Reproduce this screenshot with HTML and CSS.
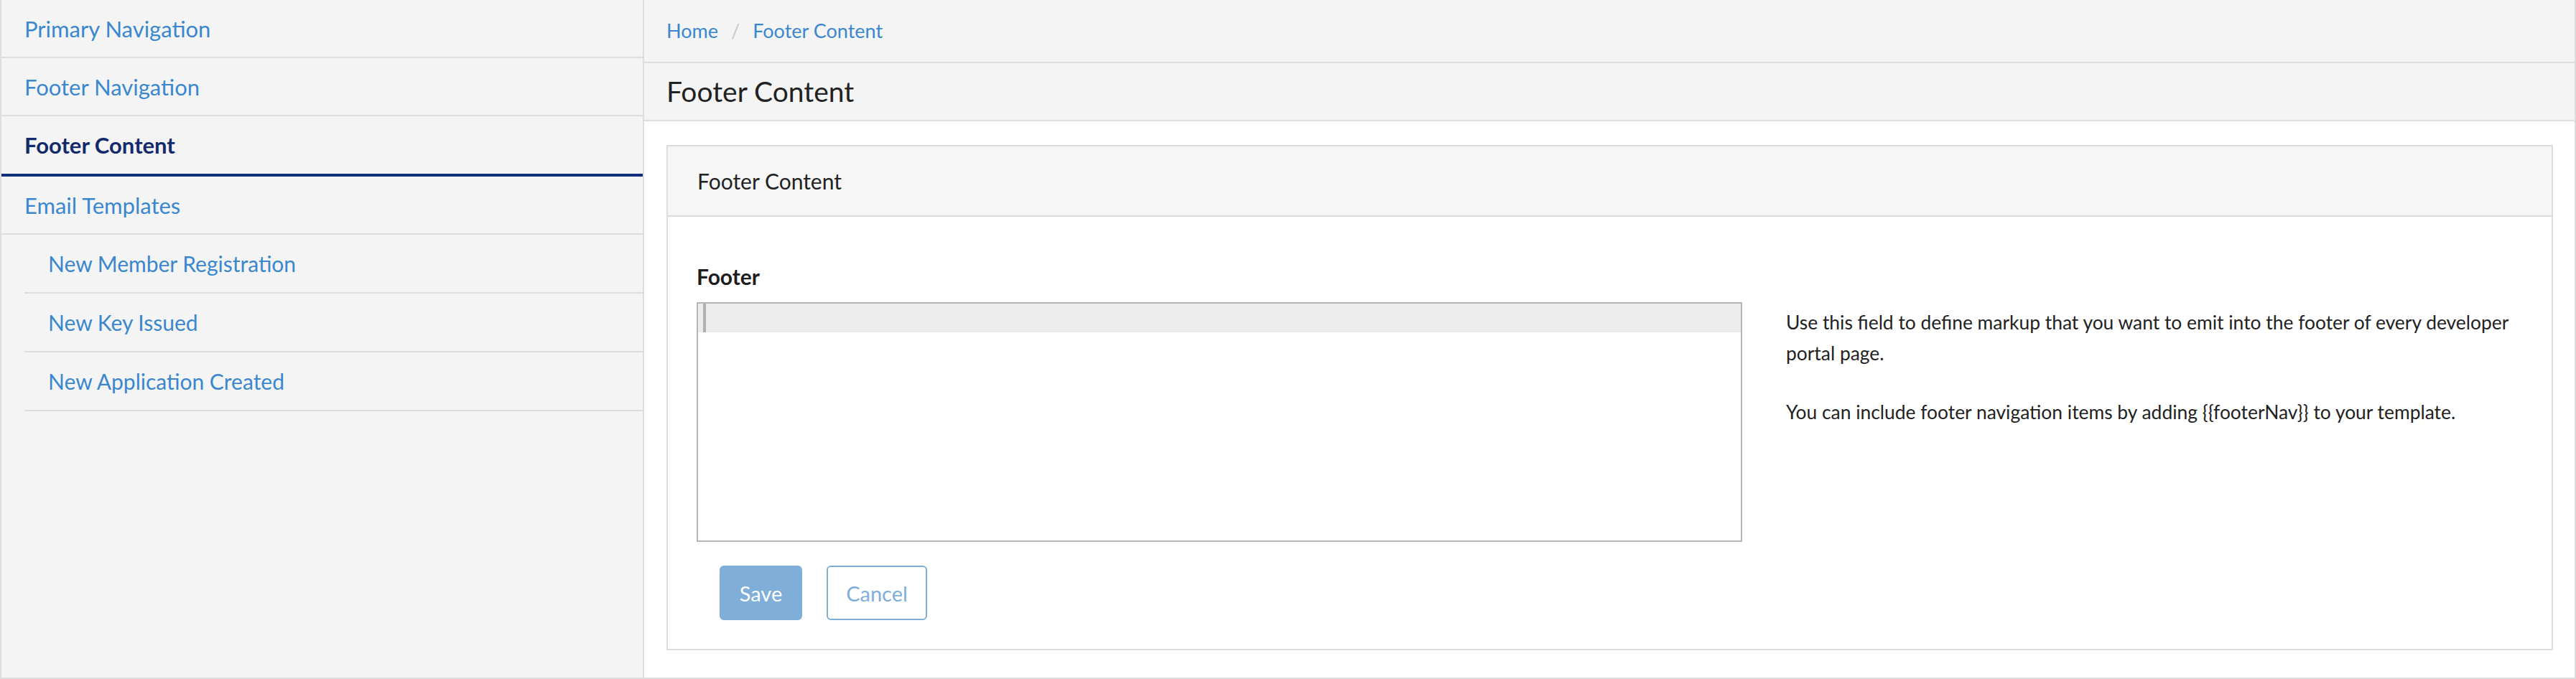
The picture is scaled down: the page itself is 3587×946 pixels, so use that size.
FILE: index.html
```html
<!DOCTYPE html>
<html lang="en">
<head>
<meta charset="utf-8">
<title>Footer Content</title>
<link rel="stylesheet" href="styles.css">
</head>
<body>
<div class="app">
  <nav class="sidebar">
    <a class="nav-item" href="#">Primary Navigation</a>
    <a class="nav-item" href="#">Footer Navigation</a>
    <a class="nav-item active" href="#">Footer Content</a>
    <a class="nav-item" href="#">Email Templates</a>
    <a class="nav-item sub" href="#">New Member Registration</a>
    <a class="nav-item sub" href="#">New Key Issued</a>
    <a class="nav-item sub" href="#">New Application Created</a>
  </nav>
  <main class="main">
    <div class="breadcrumb">
      <a href="#">Home</a>
      <span class="crumb-sep">/</span>
      <a href="#">Footer Content</a>
    </div>
    <div class="page-title">Footer Content</div>
    <div class="content">
      <section class="panel">
        <div class="panel-header">Footer Content</div>
        <div class="panel-body">
          <div class="field-label">Footer</div>
          <div class="field-row">
            <div class="editor">
              <div class="editor-line"><span class="cursor"></span></div>
            </div>
            <div class="help">
              <p>Use this field to define markup that you want to emit into the footer of every developer portal page.</p>
              <p>You can include footer navigation items by adding {{footerNav}} to your template.</p>
            </div>
          </div>
          <div class="actions">
            <button class="btn btn-primary" type="button">Save</button>
            <button class="btn btn-outline" type="button">Cancel</button>
          </div>
        </div>
      </section>
    </div>
  </main>
</div>
</body>
</html>
```

FILE: styles.css
```css
* { box-sizing: border-box; }

html, body {
  margin: 0;
  padding: 0;
  background: #ffffff;
}

body {
  font-family: Lato, "Open Sans", "Liberation Sans", sans-serif;
  color: #222222;
}

.app {
  display: flex;
  height: 946px;
  border-left: 2px solid #dddddd;
  border-right: 2px solid #dddddd;
  border-bottom: 2px solid #dddddd;
}

.sidebar {
  width: 895px;
  flex: none;
  background: #f4f4f4;
  border-right: 2px solid #dddddd;
  display: flex;
  flex-direction: column;
}

.nav-item {
  display: flex;
  align-items: center;
  height: 81px;
  padding-left: 32px;
  border-bottom: 2px solid #dddddd;
  color: #3a87cf;
  text-decoration: none;
  font-size: 31px;
}

.nav-item.active {
  height: 84px;
  color: #12296b;
  font-weight: 700;
  border-bottom: 4px solid #12307a;
}

.nav-item.sub {
  height: 82px;
  margin-left: 32px;
  padding-left: 33px;
  font-size: 30px;
}

.main {
  flex: 1;
  display: flex;
  flex-direction: column;
  min-width: 0;
}

.breadcrumb {
  height: 89px;
  background: #f4f4f4;
  border-bottom: 2px solid #dddddd;
  display: flex;
  align-items: center;
  padding-left: 31px;
  font-size: 27px;
}

.breadcrumb a {
  color: #3a87cf;
  text-decoration: none;
}

.crumb-sep {
  color: #c8c8c8;
  margin: 0 18px;
}

.page-title {
  height: 82px;
  background: #f4f4f4;
  border-bottom: 2px solid #dddddd;
  display: flex;
  align-items: center;
  padding-left: 31px;
  font-size: 39px;
  color: #222222;
}

.content {
  flex: 1;
  padding: 33px 30px 38px 31px;
}

.panel {
  border: 2px solid #dddddd;
}

.panel-header {
  height: 98px;
  background: #f6f6f6;
  border-bottom: 2px solid #dddddd;
  display: flex;
  align-items: center;
  padding-left: 41px;
  font-size: 30px;
  color: #222222;
}

.panel-body {
  padding: 61px 39px 40px 40px;
}

.field-label {
  font-size: 30px;
  font-weight: 700;
  line-height: 44px;
  margin-bottom: 14px;
  color: #1d1d1d;
}

.field-row {
  display: grid;
  grid-template-columns: 1456px 1fr;
  column-gap: 61px;
}

.editor {
  height: 334px;
  border: 2px solid #b5b5b5;
  background: #ffffff;
}

.editor-line {
  height: 40px;
  background: #ececec;
  padding-left: 7px;
}

.cursor {
  display: block;
  width: 4px;
  height: 40px;
  background: #b0b0b0;
}

.help {
  padding-top: 7px;
  font-size: 26.4px;
  line-height: 43px;
  color: #222222;
}

.help p {
  margin: 0 0 39px 0;
}

.actions {
  display: flex;
  gap: 34px;
  margin-top: 33px;
  margin-left: 32px;
}

.btn {
  height: 76px;
  border-radius: 6px;
  font-family: inherit;
  font-size: 29px;
  padding: 0;
  cursor: pointer;
}

.btn-primary {
  width: 115px;
  background: #7faed9;
  border: 2px solid #7faed9;
  color: #ffffff;
}

.btn-outline {
  width: 140px;
  background: #ffffff;
  border: 2px solid #7faed9;
  color: #7faed9;
}
```
